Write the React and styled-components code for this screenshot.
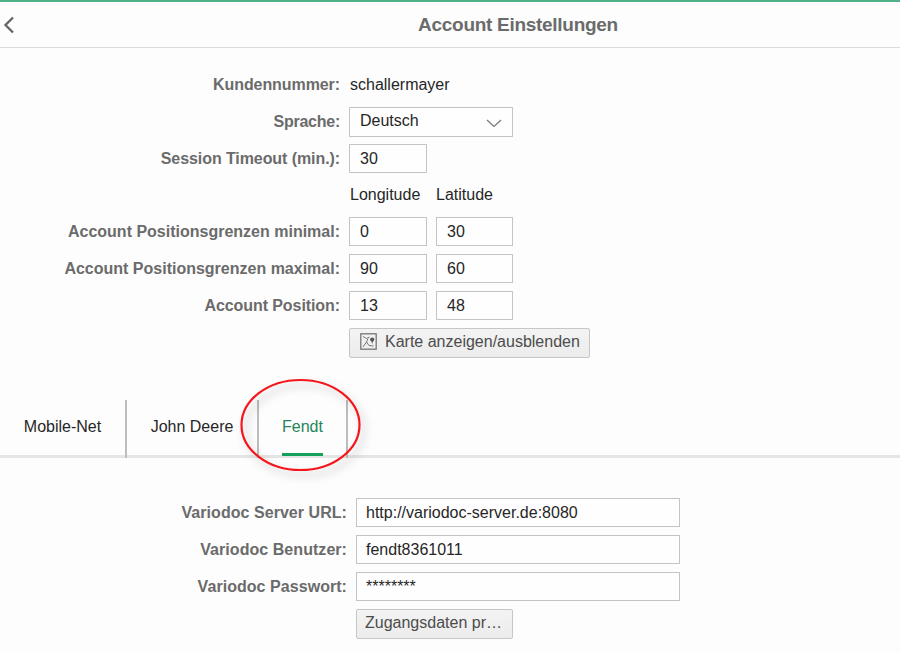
import * as React from "react";
import styled, { createGlobalStyle } from "styled-components";

const GlobalStyle = createGlobalStyle`
  * {
    box-sizing: border-box;
  }

  body {
    margin: 0;
    background: #fdfdfd;
    color: #262626;
    font: 16px/20px "Liberation Sans", Arial, sans-serif;
  }
`;

const Page = styled.div`
  height: 653px;
  overflow: hidden;
  border-top: 2px solid #52b186;
`;

const Header = styled.header`
  display: flex;
  align-items: center;

  height: 46px;
  padding-left: 3px;
  border-bottom: 1px solid #dcdcdc;
`;

const BackButton = styled.button`
  display: flex;

  width: 12px;
  padding: 0;
  border: 0;
  background: none;
  color: #666;
`;

const PageTitle = styled.h1`
  flex: 1;

  margin: 0 0 0 121px;
  font-size: 19px;
  line-height: 22px;
  text-align: center;
  letter-spacing: -0.29px;
  color: #6b6b6b;
`;

const Form = styled.form`
  padding-top: ${props => props.$top}px;
`;

const Row = styled.div`
  display: flex;
  align-items: center;

  height: ${props => props.$height || 37}px;
`;

const Label = styled.label`
  flex: 0 0 ${props => props.$width}px;

  margin-right: 9px;
  text-align: right;
  white-space: nowrap;
  font-weight: 700;
  letter-spacing: ${props => props.$spacing || 0}px;
  color: #6b6b6b;
`;

const ColumnTitle = styled.span`
  flex: 0 0 86px;

  padding-left: 1px;
`;

const Value = styled.span`
  padding: 1px 0 0 1px;
`;

const Input = styled.input`
  width: ${props => props.$width || 78}px;
  height: 29px;
  margin-right: 9px;
  padding: 1px 9px 0 ${props => props.$indent || 10}px;
  border: 1px solid #c4c4c4;
  background: #fefefe;
  color: inherit;
  font: inherit;

  & + & {
    width: 77px;
  }
`;

const Select = styled.div`
  display: flex;
  justify-content: space-between;
  align-items: center;

  width: 164px;
  height: 30px;
  padding: 0 10px 1px;
  border: 1px solid #c4c4c4;
  background: #fefefe;
`;

const Chevron = styled.svg`
  margin-top: 4px;
`;

const Button = styled.button`
  display: flex;
  align-items: center;
  gap: 8px;

  width: ${props => props.$width}px;
  height: 30px;
  padding: 0 8px 2px ${props => props.$indent}px;
  border: 1px solid #c6c6c6;
  border-radius: 2px;
  background: linear-gradient(#f3f3f3, #ececec);
  color: #4c4c4c;
  font: inherit;
  white-space: nowrap;
`;

const Tabs = styled.nav`
  position: relative;
  display: flex;

  height: 58px;
  margin-top: 39px;
  background: linear-gradient(#e5e5e5, #e5e5e5) 0 55px / 100% 3px no-repeat;
`;

const Tab = styled.a`
  display: flex;
  justify-content: center;

  width: ${props => props.$width}px;
  border-right: 2px solid #bdbdbd;
  color: ${props => (props.$active ? "#25855a" : "inherit")};
`;

const TabText = styled.span`
  height: 56px;
  padding-top: 17px;
  border-bottom: ${props => (props.$active ? "3px solid #13a15b" : "0")};
`;

const Marker = styled.svg`
  position: absolute;
  left: 231px;
  top: -31px;
  overflow: visible;
  pointer-events: none;
  filter: drop-shadow(4px 5px 4px rgba(0, 0, 0, 0.25));
`;

const MapIcon = () => (
  <svg width="17" height="17" viewBox="0 0 17 17" fill="none" stroke="#777">
    <rect x="0.8" y="0.8" width="15.4" height="15.4" strokeWidth="1.3" />
    <path d="M3 3.5l3.5 2 3-1.5M8 5.5L6.5 9 3 14M6.5 9l2.5 3.5 4.5.5" />
    <circle cx="12.2" cy="6.6" r="2.1" fill="#555" stroke="none" />
    <path d="M12.2 7v3.2" stroke="#555" />
  </svg>
);

const bounds = [
  { label: "Account Positionsgrenzen minimal:", values: ["0", "30"] },
  { label: "Account Positionsgrenzen maximal:", values: ["90", "60"] },
  { label: "Account Position:", values: ["13", "48"], spacing: -0.08 }
];

const credentials = [
  { label: "Variodoc Server URL:", value: "http://variodoc-server.de:8080" },
  { label: "Variodoc Benutzer:", value: "fendt8361011" },
  { label: "Variodoc Passwort:", value: "********" }
];

const AccountForm = () => (
  <Form $top={18}>
    <Row>
      <Label $width={340} $spacing={-0.08}>
        Kundennummer:
      </Label>
      <Value>schallermayer</Value>
    </Row>
    <Row>
      <Label $width={340} $spacing={-0.25}>
        Sprache:
      </Label>
      <Select>
        Deutsch
        <Chevron width="16" height="9" viewBox="0 0 16 9" fill="none">
          <path d="M1 1l7 6.5L15 1" stroke="#777" strokeWidth="1.2" />
        </Chevron>
      </Select>
    </Row>
    <Row>
      <Label $width={340} $spacing={-0.08}>
        Session Timeout (min.):
      </Label>
      <Input defaultValue="30" />
    </Row>
    <Row $height={36}>
      <Label $width={340} />
      <ColumnTitle>Longitude</ColumnTitle>
      <ColumnTitle>Latitude</ColumnTitle>
    </Row>
    {bounds.map(({ label, values, spacing }) => (
      <Row key={label}>
        <Label $width={340} $spacing={spacing}>
          {label}
        </Label>
        {values.map(value => <Input key={value} defaultValue={value} />)}
      </Row>
    ))}
    <Row>
      <Label $width={340} />
      <Button type="button" $width={241} $indent={10}>
        <MapIcon />
        Karte anzeigen/ausblenden
      </Button>
    </Row>
  </Form>
);

const ServerForm = () => (
  <Form $top={36}>
    {credentials.map(({ label, value }) => (
      <Row key={label}>
        <Label $width={347} $spacing={0.05}>
          {label}
        </Label>
        <Input $width={324} $indent={9} defaultValue={value} />
      </Row>
    ))}
    <Row>
      <Label $width={347} />
      <Button type="button" $width={157} $indent={8}>
        Zugangsdaten pr…
      </Button>
    </Row>
  </Form>
);

const App = () => (
  <Page>
    <GlobalStyle />
    <Header>
      <BackButton aria-label="Zurück">
        <svg width="12" height="18" viewBox="0 0 12 18" fill="none">
          <path d="M10 1.5L2.5 9l7.5 7.5" stroke="currentColor" strokeWidth="2.3" />
        </svg>
      </BackButton>
      <PageTitle>Account Einstellungen</PageTitle>
    </Header>
    <AccountForm />
    <Tabs>
      <Tab $width={127}>
        <TabText>Mobile-Net</TabText>
      </Tab>
      <Tab $width={132}>
        <TabText>John Deere</TabText>
      </Tab>
      <Tab $width={89} $active>
        <TabText $active>Fendt</TabText>
      </Tab>
      <Marker width="140" height="112" fill="none">
        <ellipse cx="69.5" cy="56" rx="59" ry="45" stroke="#f5161b" strokeWidth="2.2" />
      </Marker>
    </Tabs>
    <ServerForm />
  </Page>
);

export default App;
